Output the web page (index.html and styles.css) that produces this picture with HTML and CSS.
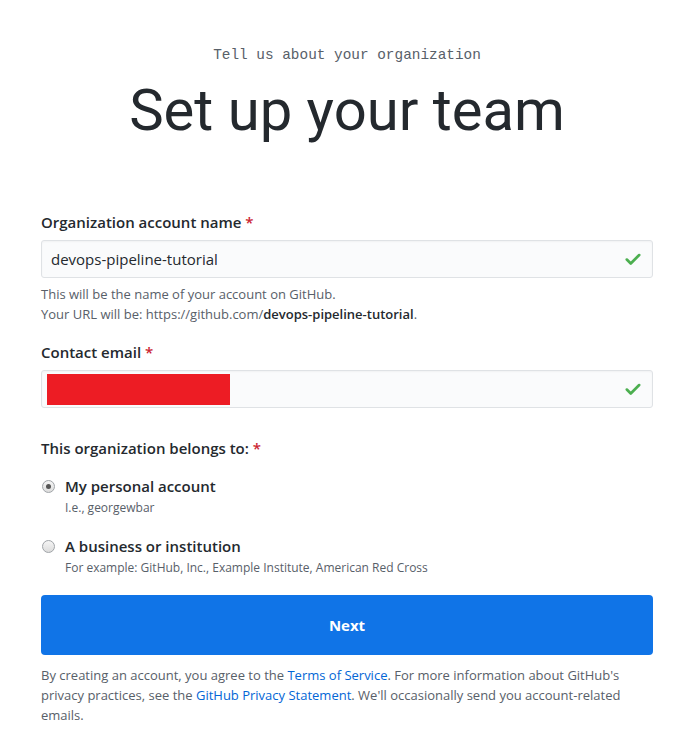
FILE: index.html
```html
<!DOCTYPE html>
<html>
<head>
<meta charset="utf-8">
<link rel="stylesheet" href="styles.css">
</head>
<body>
<div class="page">
  <header class="intro">
    <p class="kicker">Tell us about your organization</p>
    <h1 class="title">Set up your team</h1>
  </header>
  <form class="form">
    <div class="field first">
      <label class="label">Organization account name <span class="req">*</span></label>
      <div class="input">
        <span class="value">devops-pipeline-tutorial</span>
        <svg class="check" width="18" height="18" viewBox="0 0 16 16"><path d="M2.5 8.5 L6 12 L13.5 4.5" fill="none" stroke="#4caf50" stroke-width="2.4" stroke-linecap="round" stroke-linejoin="round"/></svg>
      </div>
      <p class="note">This will be the name of your account on GitHub.<br>Your URL will be: https://github.com/<strong>devops-pipeline-tutorial</strong>.</p>
    </div>
    <div class="field email">
      <label class="label">Contact email <span class="req">*</span></label>
      <div class="input">
        <span class="redact"></span>
        <svg class="check" width="18" height="18" viewBox="0 0 16 16"><path d="M2.5 8.5 L6 12 L13.5 4.5" fill="none" stroke="#4caf50" stroke-width="2.4" stroke-linecap="round" stroke-linejoin="round"/></svg>
      </div>
    </div>
    <div class="field group">
      <label class="label">This organization belongs to: <span class="req">*</span></label>
      <div class="option">
        <span class="radio checked"></span>
        <div>
          <div class="opt-title">My personal account</div>
          <div class="opt-note">I.e., georgewbar</div>
        </div>
      </div>
      <div class="option">
        <span class="radio"></span>
        <div>
          <div class="opt-title">A business or institution</div>
          <div class="opt-note">For example: GitHub, Inc., Example Institute, American Red Cross</div>
        </div>
      </div>
    </div>
    <button type="button" class="next">Next</button>
    <p class="legal">By creating an account, you agree to the <a href="#">Terms of Service</a>. For more information about GitHub's privacy practices, see the <a href="#">GitHub Privacy Statement</a>. We'll occasionally send you account-related emails.</p>
  </form>
</div>
</body>
</html>
```
FILE: styles.css
```css
* { box-sizing: border-box; }
body {
  margin: 0;
  background: #fff;
  font-family: "Open Sans", "Noto Sans", sans-serif;
  color: #24292e;
}
.page {
  width: 612px;
  margin: 0 auto;
  padding-top: 45px;
}
.intro { text-align: center; }
.kicker {
  margin: 0;
  font-family: "Liberation Mono", monospace;
  font-size: 14.4px;
  line-height: 20px;
  color: #586069;
}
.title {
  margin: 10px 0 0;
  font-family: Roboto, sans-serif;
  font-weight: 400;
  font-size: 58px;
  line-height: 70px;
  color: #24292e;
}
.form { margin-top: 67px; }
.field { margin-bottom: 24px; }
.field.first { margin-bottom: 18px; }
.field.email { margin-bottom: 30px; }
.label {
  display: block;
  font-size: 15px;
  font-weight: 600;
  line-height: 20px;
  margin-bottom: 8px;
}
.req { color: #cb2431; }
.input {
  height: 38px;
  background: #fafbfc;
  border: 1px solid #dfe2e5;
  border-radius: 3px;
  display: flex;
  align-items: center;
  justify-content: space-between;
  padding: 0 10px 0 9px;
  box-shadow: inset 0 1px 2px rgba(27,31,35,0.04);
}
.value { font-size: 15px; color: #24292e; }
.redact {
  display: block;
  width: 183px;
  height: 31px;
  background: #ed1c24;
  margin-left: -4px;
}
.check { flex: none; }
.note {
  margin: 6px 0 0;
  font-size: 13px;
  line-height: 20px;
  color: #586069;
}
.note strong { color: #24292e; font-weight: 600; }
.group { margin-bottom: 17px; }
.group .label { margin-bottom: 18px; }
.option {
  display: flex;
  gap: 10px;
  margin-bottom: 18px;
  padding-left: 1px;
}
.option:last-child { margin-bottom: 0; }
.radio {
  flex: none;
  width: 13px;
  height: 13px;
  border-radius: 50%;
  border: 1px solid #a0a4a8;
  background: linear-gradient(#f5f5f5, #dcdcdc);
  margin-top: 4px;
  position: relative;
}
.radio.checked::after {
  content: "";
  position: absolute;
  left: 3px;
  top: 3px;
  width: 5px;
  height: 5px;
  border-radius: 50%;
  background: #555;
}
.opt-title { font-size: 15px; font-weight: 600; line-height: 20px; }
.opt-note { font-size: 12px; line-height: 20px; color: #586069; margin-top: 2px; }
.next {
  display: block;
  width: 100%;
  height: 60px;
  border: 0;
  border-radius: 4px;
  background: #1074e7;
  color: #fff;
  font-family: inherit;
  font-size: 15px;
  font-weight: 700;
}
.legal {
  margin: 10px 0 0;
  font-size: 13px;
  line-height: 20px;
  color: #586069;
}
.legal a { color: #0366d6; text-decoration: none; }
```
